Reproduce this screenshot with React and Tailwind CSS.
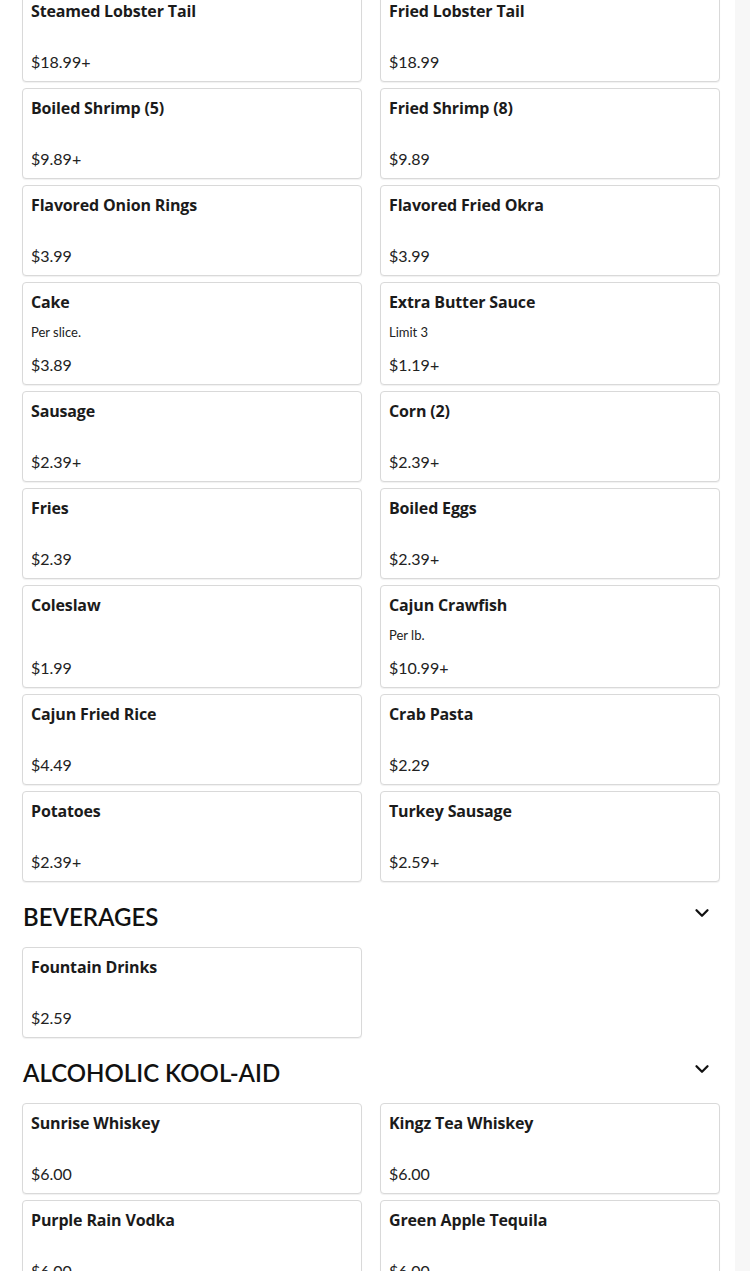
import { ChevronDown } from "lucide-react";

const sides = [
  { name: "Steamed Lobster Tail", price: "$18.99+" },
  { name: "Fried Lobster Tail", price: "$18.99" },
  { name: "Boiled Shrimp (5)", price: "$9.89+" },
  { name: "Fried Shrimp (8)", price: "$9.89" },
  { name: "Flavored Onion Rings", price: "$3.99" },
  { name: "Flavored Fried Okra", price: "$3.99" },
  { name: "Cake", desc: "Per slice.", price: "$3.89" },
  { name: "Extra Butter Sauce", desc: "Limit 3", price: "$1.19+" },
  { name: "Sausage", price: "$2.39+" },
  { name: "Corn (2)", price: "$2.39+" },
  { name: "Fries", price: "$2.39" },
  { name: "Boiled Eggs", price: "$2.39+" },
  { name: "Coleslaw", price: "$1.99" },
  { name: "Cajun Crawfish", desc: "Per lb.", price: "$10.99+" },
  { name: "Cajun Fried Rice", price: "$4.49" },
  { name: "Crab Pasta", price: "$2.29" },
  { name: "Potatoes", price: "$2.39+" },
  { name: "Turkey Sausage", price: "$2.59+" },
];

const beverages = [{ name: "Fountain Drinks", price: "$2.59" }];

const koolAid = [
  { name: "Sunrise Whiskey", price: "$6.00" },
  { name: "Kingz Tea Whiskey", price: "$6.00" },
  { name: "Purple Rain Vodka", price: "$6.00" },
  { name: "Green Apple Tequila", price: "$6.00" },
];

function ItemCard({ item }) {
  return (
    <div className="flex flex-col min-h-[91px] rounded-[4px] border border-[#d9d9d9] bg-white px-2 pt-[7px] pb-[7px] shadow-[0_1px_1px_rgba(0,0,0,0.06)]">
      <div
        className="text-[16px] leading-6 font-bold text-[#1b1b1b] tracking-[-0.15px]"
        style={{ fontFamily: "'Open Sans', sans-serif" }}
      >
        {item.name}
      </div>
      {item.desc && (
        <div className="mt-2 text-[13px] leading-5 text-[#222]">{item.desc}</div>
      )}
      <div className="mt-auto pt-[11px] text-[16px] leading-6 text-[#222]">{item.price}</div>
    </div>
  );
}

function Grid({ items }) {
  return (
    <div className="grid grid-cols-2 gap-x-[18px] gap-y-[6px]">
      {items.map((item) => (
        <ItemCard key={item.name} item={item} />
      ))}
    </div>
  );
}

function SectionHeader({ title }) {
  return (
    <div className="mt-[19px] mb-[14px] flex items-center justify-between">
      <h2 className="text-[24px] leading-8 font-semibold text-[#111] pl-px">{title}</h2>
      <ChevronDown size={22} strokeWidth={2.5} className="mr-[7px] -mt-2 text-[#111]" />
    </div>
  );
}

export default function App() {
  return (
    <div
      className="flex w-[750px] h-[1271px] overflow-hidden bg-white"
      style={{ fontFamily: "Lato, 'Noto Sans', sans-serif" }}
    >
      <div className="flex-1 pl-[22px] pr-[15px]">
        <div className="-mt-[9px]">
          <Grid items={sides} />
        </div>
        <SectionHeader title="BEVERAGES" />
        <Grid items={beverages} />
        <SectionHeader title="ALCOHOLIC KOOL-AID" />
        <Grid items={koolAid} />
      </div>
      <div className="w-[15px] bg-[#f7f7f7]" />
    </div>
  );
}
